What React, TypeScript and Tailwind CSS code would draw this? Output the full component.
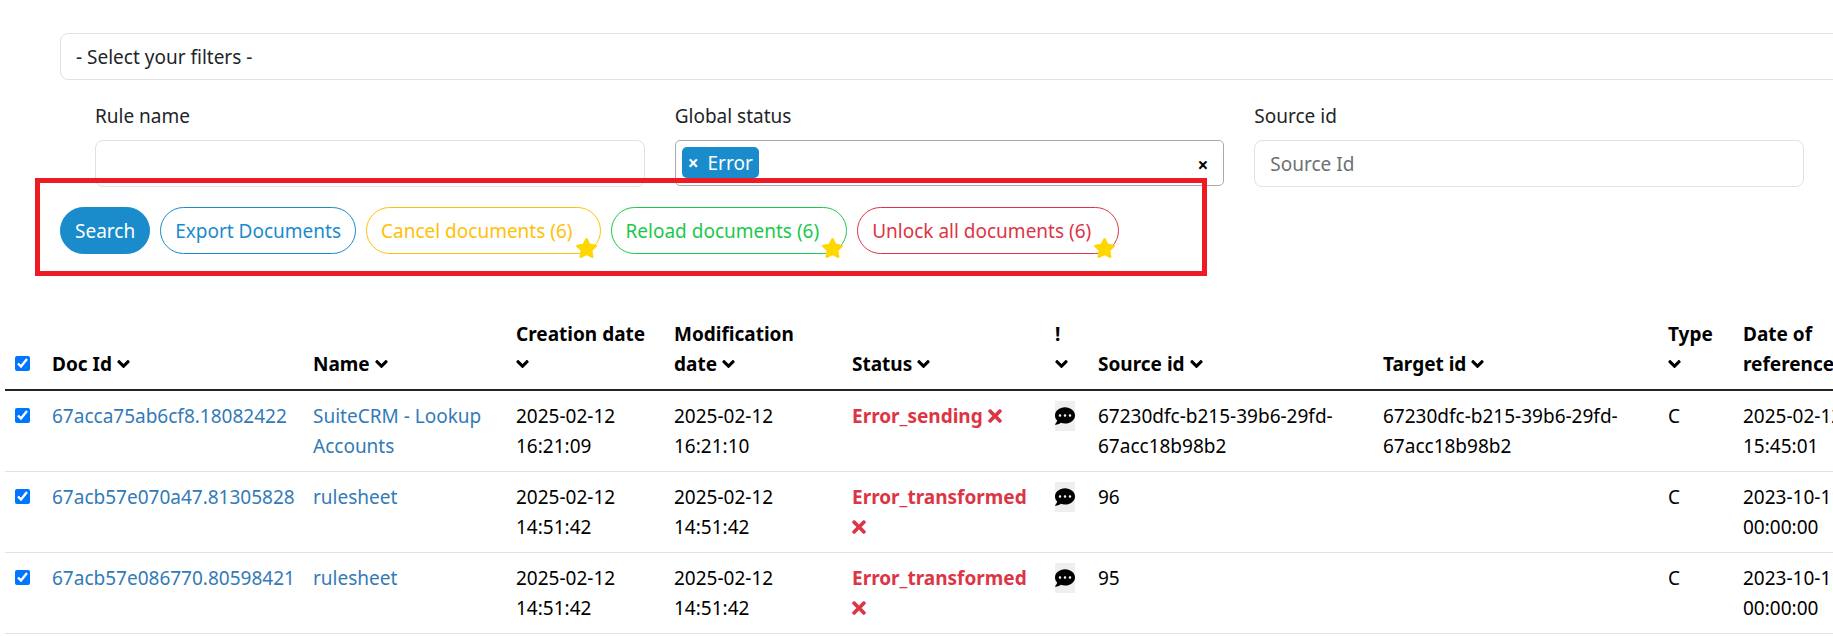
import type { ReactNode } from "react";
import { FaAngleDown, FaCommentDots, FaStar, FaTimes } from "react-icons/fa";

type Row = {
  id: string;
  name: string;
  created: [string, string];
  modified: [string, string];
  status: string;
  source: string;
  target: string;
  type: string;
  reference: [string, string];
};

const rows: Row[] = [
  {
    id: "67acca75ab6cf8.18082422",
    name: "SuiteCRM - Lookup Accounts",
    created: ["2025-02-12", "16:21:09"],
    modified: ["2025-02-12", "16:21:10"],
    status: "Error_sending",
    source: "67230dfc-b215-39b6-29fd-67acc18b98b2",
    target: "67230dfc-b215-39b6-29fd-67acc18b98b2",
    type: "C",
    reference: ["2025-02-12", "15:45:01"],
  },
  {
    id: "67acb57e070a47.81305828",
    name: "rulesheet",
    created: ["2025-02-12", "14:51:42"],
    modified: ["2025-02-12", "14:51:42"],
    status: "Error_transformed",
    source: "96",
    target: "",
    type: "C",
    reference: ["2023-10-11", "00:00:00"],
  },
  {
    id: "67acb57e086770.80598421",
    name: "rulesheet",
    created: ["2025-02-12", "14:51:42"],
    modified: ["2025-02-12", "14:51:42"],
    status: "Error_transformed",
    source: "95",
    target: "",
    type: "C",
    reference: ["2023-10-11", "00:00:00"],
  },
];

function Sort() {
  return <FaAngleDown className="inline-block h-5 w-[13px] align-[-3px]" aria-hidden="true" />;
}

function Head({ children }: { children: ReactNode }) {
  return (
    <th scope="col" className="p-[10px] text-left align-bottom font-bold">
      {children}
    </th>
  );
}

function Cell({ children }: { children?: ReactNode }) {
  return <td className="p-[10px] align-top">{children}</td>;
}

function StarButton({ className, children }: { className: string; children: ReactNode }) {
  return (
    <button type="button" className={`relative h-[47px] rounded-full border pr-[27px] pl-[14px] whitespace-nowrap ${className}`}>
      {children}
      <FaStar className="absolute right-[2px] -bottom-[5px] h-5 w-[23px] text-[#ffd700]" aria-hidden="true" />
    </button>
  );
}

export default function App() {
  return (
    <main className="min-h-screen overflow-hidden bg-white pt-[33px] font-['Noto_Sans','Open_Sans',sans-serif] text-[19px] leading-[30px] text-[#212529]">
      <form onSubmit={(e) => e.preventDefault()}>
        <div className="-mr-10 pl-[60px]">
          <select
            aria-label="Filters"
            className="block h-[47px] w-full appearance-none rounded-[8px] border border-[#dee2e6] bg-white px-[15px]"
          >
            <option>- Select your filters -</option>
          </select>
        </div>

        <div className="mt-[21px] grid grid-cols-3 gap-[30px] pr-[29px] pl-[95px]">
          <div>
            <label htmlFor="rule" className="mb-[9px] block">Rule name</label>
            <input id="rule" type="text" className="block h-[47px] w-full rounded-[8px] border border-[#dee2e6] px-[15px]" />
          </div>
          <div>
            <span id="status-label" className="mb-[9px] block">Global status</span>
            <div
              role="group"
              aria-labelledby="status-label"
              className="flex h-[46px] w-full items-start justify-between rounded-[5px] border border-[#aaa] pt-[6px] pr-[15px] pl-[6px]"
            >
              <span className="flex h-[31px] items-center gap-[9px] rounded-[5px] bg-[#1a8bcb] px-[6px] pt-[1px] text-white">
                <button type="button" aria-label="Remove Error" className="font-bold">×</button>
                Error
              </span>
              <button type="button" aria-label="Clear all" className="pt-[3px] font-bold text-black">×</button>
            </div>
          </div>
          <div>
            <label htmlFor="source" className="mb-[9px] block">Source id</label>
            <input
              id="source"
              type="text"
              placeholder="Source Id"
              className="block h-[47px] w-full rounded-[8px] border border-[#dee2e6] px-[15px] placeholder:text-[#6b7075]"
            />
          </div>
        </div>

        <div className="relative mt-5 flex gap-[10px] pl-[60px]">
          <button type="submit" className="h-[47px] rounded-full border border-[#1a8bcb] bg-[#1a8bcb] px-[14px] text-white">
            Search
          </button>
          <button type="button" className="h-[47px] rounded-full border border-[#1a8bcb] px-[14px] whitespace-nowrap text-[#1a8bcb]">
            Export Documents
          </button>
          <StarButton className="border-[#ffc107] text-[#ffc107]">Cancel documents (6)</StarButton>
          <StarButton className="border-[#1ac94b] text-[#1ac94b]">Reload documents (6)</StarButton>
          <StarButton className="border-[#dc3545] text-[#dc3545]">Unlock all documents (6)</StarButton>
          <div className="pointer-events-none absolute -top-[29px] left-[35px] h-[98px] w-[1172px] border-[5px] border-[#ed1c24]" />
        </div>
      </form>

      <div className="mt-[55px] ml-[5px]">
        <table className="w-[104%] table-fixed border-collapse text-black">
          <colgroup>
            <col className="w-[37px]" />
            <col className="w-[261px]" />
            <col className="w-[203px]" />
            <col className="w-[158px]" />
            <col className="w-[178px]" />
            <col className="w-[203px]" />
            <col className="w-[43px]" />
            <col className="w-[285px]" />
            <col className="w-[285px]" />
            <col className="w-[75px]" />
            <col />
          </colgroup>
          <thead>
            <tr className="border-b-2 border-[#212529]">
              <Head>
                <input type="checkbox" defaultChecked aria-label="Select all documents" className="mb-[8px] block h-[15px] w-[15px]" />
              </Head>
              <Head>Doc Id <Sort /></Head>
              <Head>Name <Sort /></Head>
              <Head><span className="whitespace-nowrap">Creation date</span><br /><Sort /></Head>
              <Head>Modification<br />date <Sort /></Head>
              <Head>Status <Sort /></Head>
              <Head>!<br /><Sort /></Head>
              <Head>Source id <Sort /></Head>
              <Head>Target id <Sort /></Head>
              <Head><span className="whitespace-nowrap">Type</span><br /><Sort /></Head>
              <Head>Date of<br />reference <Sort /></Head>
            </tr>
          </thead>
          <tbody>
            {rows.map((r) => (
              <tr key={r.id} className="border-b border-[#dee2e6]">
                <Cell>
                  <input type="checkbox" defaultChecked aria-label={`Select ${r.id}`} className="mt-[7px] block h-[15px] w-[15px]" />
                </Cell>
                <Cell><a href="#" className="whitespace-nowrap text-[#337ab7]">{r.id}</a></Cell>
                <Cell><a href="#" className="text-[#337ab7]">{r.name}</a></Cell>
                <Cell>{r.created[0]}<br />{r.created[1]}</Cell>
                <Cell>{r.modified[0]}<br />{r.modified[1]}</Cell>
                <Cell>
                  <span className="font-bold text-[#dc3545]">
                    {r.status} <FaTimes className="inline-block h-5 w-[14px] align-[-3px]" aria-hidden="true" />
                  </span>
                </Cell>
                <Cell>
                  <button type="button" aria-label="Show message" className="flex h-[30px] w-5 items-center bg-[#efefef]">
                    <FaCommentDots className="h-5 w-5" />
                  </button>
                </Cell>
                <Cell>{r.source}</Cell>
                <Cell>{r.target}</Cell>
                <Cell>{r.type}</Cell>
                <Cell><span className="whitespace-nowrap">{r.reference[0]}</span><br />{r.reference[1]}</Cell>
              </tr>
            ))}
          </tbody>
        </table>
      </div>
    </main>
  );
}
